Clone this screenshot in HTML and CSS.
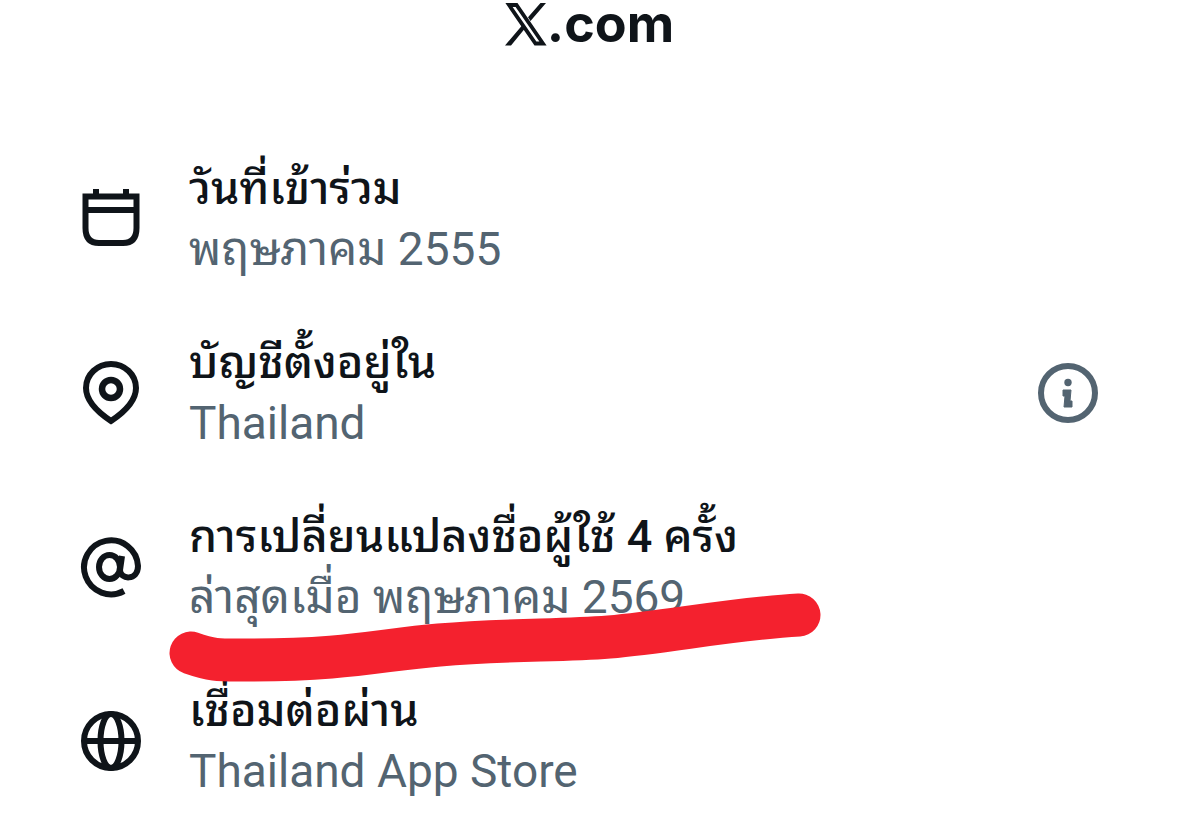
FILE: index.html
```html
<!DOCTYPE html>
<html lang="th">
<head>
    <meta charset="UTF-8">
    <meta name="viewport" content="width=device-width, initial-scale=1.0">
    <title>X.com</title>
    <link rel="stylesheet" href="styles.css">
</head>
<body>
    <main class="about">
        <h1 class="brand">
            <svg class="brand-logo" viewBox="0 0 42 43" aria-hidden="true">
                <path d="M4 2H11.500L38 40.500H30.500Z" fill="none" stroke="currentColor" stroke-width="3.800"/>
                <path d="M35.500 0H41L25.500 18L23 14.200ZM17 22.500L19.500 26L6 42.400H0Z" fill="currentColor"/>
            </svg><span>.com</span>
        </h1>

        <ul class="list">
            <li class="row">
                <svg class="icon" viewBox="0 0 64 64" aria-hidden="true">
                    <path d="M6.500 9.500H57.500V41Q57.500 56 44 56H20Q6.500 56 6.500 41ZM6.500 23H57.500M17 2V10M47 2V10" fill="none" stroke="currentColor" stroke-width="6"/>
                </svg>
                <div class="text">
                    <h2 class="label">วันที่เข้าร่วม</h2>
                    <p class="value">พฤษภาคม 2555</p>
                </div>
            </li>
            <li class="row">
                <svg class="icon" viewBox="0 0 64 64" aria-hidden="true">
                    <path d="M32 60C20 52 7 41 7 27A25 24 0 0 1 57 27C57 41 44 52 32 60Z" fill="none" stroke="currentColor" stroke-width="6"/>
                    <circle cx="32" cy="28" r="9" fill="none" stroke="currentColor" stroke-width="6.500"/>
                </svg>
                <div class="text">
                    <h2 class="label">บัญชีตั้งอยู่ใน</h2>
                    <p class="value">Thailand</p>
                </div>
                <button class="info" type="button" aria-label="Info">
                    <svg class="icon" viewBox="0 0 64 64" aria-hidden="true">
                        <circle cx="32" cy="32" r="27" fill="none" stroke="currentColor" stroke-width="6"/>
                        <circle cx="32" cy="21.500" r="3.700" fill="currentColor"/>
                        <path d="M27 29H35L34 40H36V46H28L29 35H27Z" fill="currentColor" stroke="currentColor" stroke-width="1" stroke-linejoin="round"/>
                    </svg>
                </button>
            </li>
            <li class="row">
                <svg class="icon" viewBox="0 0 64 64" aria-hidden="true">
                    <path d="M43 21L41 35C41 45 59 46 59 31A27 27 0 1 0 45 56" fill="none" stroke="currentColor" stroke-width="6"/>
                    <ellipse cx="30.500" cy="32" rx="10.500" ry="12" fill="none" stroke="currentColor" stroke-width="6"/>
                </svg>
                <div class="text">
                    <h2 class="label">การเปลี่ยนแปลงชื่อผู้ใช้ 4 ครั้ง</h2>
                    <p class="value">ล่าสุดเมื่อ พฤษภาคม 2569</p>
                    <svg class="marker" viewBox="0 0 652 90" aria-hidden="true">
                        <path d="M22 60C45 68 50 67 80 67C180 67 210 57 270 52C340 46 390 48 440 44C500 39 560 26 630 22" fill="none" stroke="currentColor" stroke-width="43" stroke-linecap="round" stroke-linejoin="round"/>
                    </svg>
                </div>
            </li>
            <li class="row">
                <svg class="icon" viewBox="0 0 64 64" aria-hidden="true">
                    <circle cx="32" cy="32" r="27" fill="none" stroke="currentColor" stroke-width="6"/>
                    <path d="M5 32H59" stroke="currentColor" stroke-width="6"/>
                    <ellipse cx="32" cy="32" rx="10.500" ry="27" fill="none" stroke="currentColor" stroke-width="6"/>
                </svg>
                <div class="text">
                    <h2 class="label">เชื่อมต่อผ่าน</h2>
                    <p class="value">Thailand App Store</p>
                </div>
            </li>
        </ul>
    </main>
</body>
</html>
```
FILE: styles.css
```css
* {margin: 0; padding: 0; box-sizing: border-box;}

body {
    background: #fff;
    color: #0f1419;
    font-family: Roboto, "Noto Sans Thai Looped", Loma, "Noto Sans Thai", "Noto Sans", sans-serif;
}

.about {
    padding: 0 78px 0 79px;
}

.brand {
    display: flex;
    justify-content: center;
    align-items: center;
    height: 48px;
    font-family: Inter, sans-serif;
    font-size: 52px;
    line-height: 48px;
}

.brand-logo {
    width: 42px;
    height: 43px;
}

.list {
    display: grid;
    gap: 54px;
    margin-top: 111px;
    list-style: none;
}

.row {
    display: flex;
    align-items: center;
}

.icon {
    display: block;
    flex: none;
    width: 64px;
    height: 64px;
}

.text {
    position: relative;
    flex: 1;
    margin-left: 46px;
}

.label,
.value {
    font-size: 46px;
    font-weight: 400;
    line-height: 60px;
}

.label {
    font-size: 45px;
    font-weight: 500;
}

.value {
    color: #536471;
}

.info {
    border: none;
    background: none;
    color: #536471;
    cursor: pointer;
}

/* hand-drawn underline over the last change date */
.marker {
    position: absolute;
    z-index: 1;
    top: 86px;
    left: -20px;
    width: 652px;
    height: 90px;
    color: #f4212e;
}
```
